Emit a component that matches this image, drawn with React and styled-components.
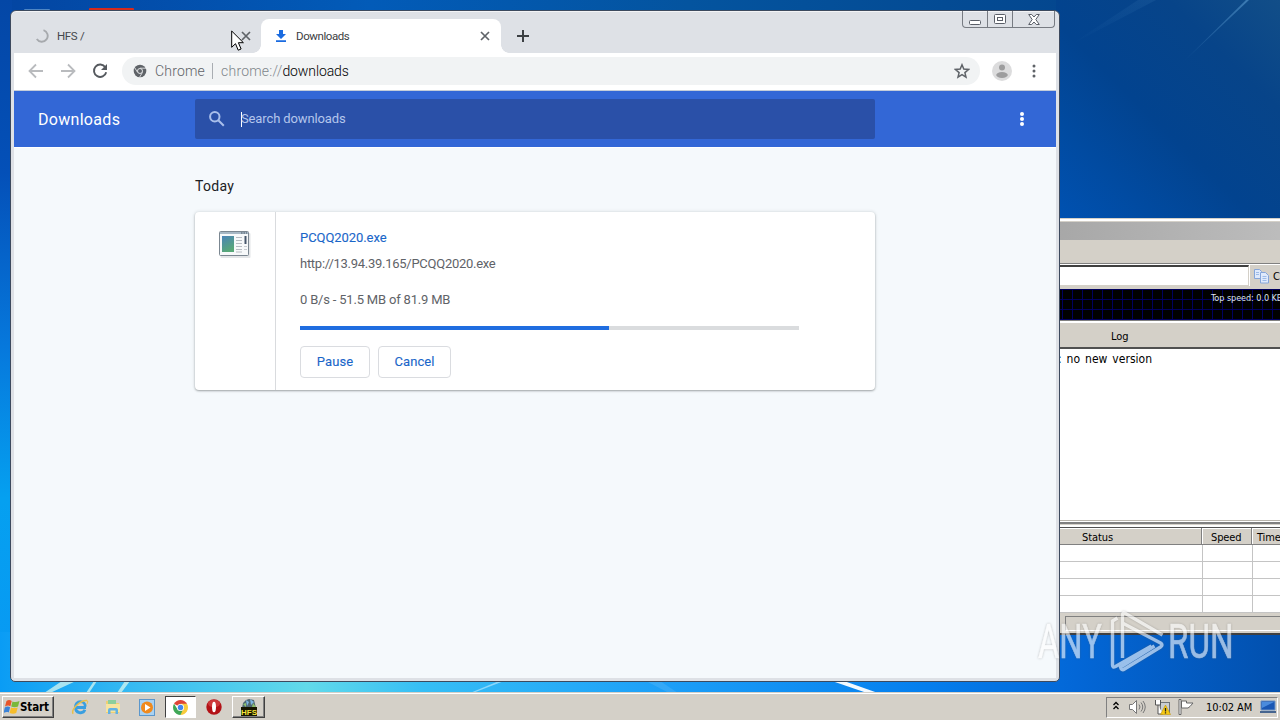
import React from "react";
import styled, { createGlobalStyle, css } from "styled-components";

const GlobalStyle = createGlobalStyle`
    * {
        box-sizing: border-box;
    }

    body {
        margin: 0;
        overflow: hidden;
    }
`;

const roboto = `Roboto, "Liberation Sans", sans-serif`;
const tahoma = `"DejaVu Sans Condensed", "DejaVu Sans", sans-serif`;

const Desktop = styled.main`
    position: relative;
    display: flex;
    flex-direction: column;
    justify-content: flex-end;
    width: 1280px;
    height: 720px;
    overflow: hidden;
    background: #0050b0;
    font-family: ${roboto};
`;

const Wallpaper = styled.svg`
    position: absolute;
    top: 0;
    left: 0;
`;

/* ---------- HFS window ---------- */

const HfsWindow = styled.section`
    position: absolute;
    top: 218px;
    left: 1000px;
    width: 300px;
    height: 417px;
    display: flex;
    flex-direction: column;
    background: #d4d0c8;
    border-top: 1px solid #d4d0c8;
    border-bottom: 2px solid #404040;
    box-shadow: inset 0 2px 0 #fff;
    font: 11px ${tahoma};
    color: #000;
`;

const HfsTitle = styled.div`
    height: 18px;
    margin-top: 3px;
    flex: none;
    background: linear-gradient(90deg, #a2a2a2, #bebebe);
`;

const HfsMenu = styled.div`
    height: 24px;
    flex: none;
    border-bottom: 1px solid #808080;
`;

const HfsAddress = styled.div`
    display: flex;
    height: 24px;
    flex: none;
    border-top: 1px solid #fff;
    border-bottom: 2px solid #d4d0c8;
`;

const HfsInput = styled.div`
    width: 249px;
    background: #fff;
    border-top: 2px solid #404040;
    border-bottom: 1px solid #d4d0c8;
    border-right: 1px solid #d4d0c8;
`;

const CopyButton = styled.div`
    display: flex;
    align-items: center;
    gap: 4px;
    padding: 1px 0 0 4px;
    border-left: 1px solid #fff;
    white-space: nowrap;
`;

const Graph = styled.div`
    height: 31px;
    flex: none;
    margin-top: 1px;
    padding: 3px 0 0 211px;
    background-color: #000;
    background-image: linear-gradient(90deg, transparent 9px, #00005e 9px), linear-gradient(transparent 9px, #00005e 9px);
    background-size: 10px 10px;
    background-position: 3px 1px;
    color: #dfe3ea;
    font-size: 9px;
    line-height: 12px;
    letter-spacing: -0.05px;
    white-space: nowrap;
`;

const LogHeader = styled.div`
    height: 29px;
    flex: none;
    padding: 3px 0 0 111px;
    border-top: 1px solid #808080;
    border-bottom: 2px solid #505050;
    box-shadow: inset 0 2px 0 #fff;
    line-height: 26px;
`;

const Log = styled.div`
    height: 171px;
    flex: none;
    padding: 2px 0 0 58px;
    background: #fff;
    font-size: 12px;
    line-height: 16px;
    letter-spacing: 0.02px;
    word-spacing: 1.5px;
`;

const Splitter = styled.div`
    height: 7px;
    flex: none;
    background: linear-gradient(#b8b4ac 1px, #fff 1px 2px, #808080 2px 4px, #d4d0c8 4px 5px, #fff 5px);
`;

const TableRow = styled.div`
    display: grid;
    grid-template-columns: 203px 50px 1fr;
    height: 17px;
    flex: none;
    ${p => p.$head ? css`
        grid-template-columns: 202px 50px 1fr;
        height: 18px;
        border-top: 1px solid #505050;
        border-bottom: 1px solid #808080;
    ` : css`
        background: #fff;
        border-bottom: 1px solid #c4c4c4;
    `}
`;

const Cell = styled.span`
    padding-left: ${p => p.$pad || 0}px;
    border-right: 1px solid ${p => p.$head ? "#808080" : "#c4c4c4"};
    ${p => p.$head && css`
        height: 16px;
        box-shadow: inset 1px 1px 0 #fff;
        line-height: 19px;
        letter-spacing: -0.1px;
    `}
`;

const HfsStatus = styled.div`
    flex: 1;
    margin: 3px 0 2px 65px;
    border-top: 1px solid #808080;
    border-left: 1px solid #808080;
    border-bottom: 1px solid #fff;
`;

/* ---------- browser ---------- */

const Browser = styled.section`
    position: absolute;
    top: 10px;
    left: 10px;
    width: 1050px;
    height: 672px;
    display: flex;
    flex-direction: column;
    padding: 0 3px 3px;
    border: 1px solid #3d4a5e;
    border-radius: 6px 6px 5px 5px;
    background: #dee1e6;
    box-shadow: inset 0 1px 0 #f3f4f6;
`;

const TabStrip = styled.header`
    display: flex;
    align-items: flex-end;
    height: 42px;
    flex: none;
    padding-left: 8px;
`;

const Tab = styled.div`
    position: relative;
    display: flex;
    align-items: center;
    width: ${p => p.$active ? 240 : 239}px;
    height: 34px;
    padding: 0 ${p => p.$active ? 11 : 10}px 0 13px;
    border-radius: 8px 8px 0 0;
    background: ${p => p.$active ? "#fff" : "transparent"};
    color: ${p => p.$active ? "#3c4043" : "#45484c"};

    ${p => p.$active && css`
        &::before,
        &::after {
            content: "";
            position: absolute;
            bottom: 0;
            width: 8px;
            height: 8px;
        }

        &::before {
            left: -8px;
            background: radial-gradient(circle at 0 0, transparent 7.5px, #fff 8px);
        }

        &::after {
            right: -8px;
            background: radial-gradient(circle at 100% 0, transparent 7.5px, #fff 8px);
        }
    `}
`;

const TabTitle = styled.span`
    flex: 1;
    margin-left: 8px;
    font-size: 11.5px;
    letter-spacing: -0.42px;
    word-spacing: 0.5px;
`;

const NewTab = styled.div`
    display: flex;
    align-items: center;
    height: 34px;
    margin-left: 15px;
`;

const WindowButtons = styled.div`
    display: flex;
    align-self: flex-start;
    height: 17px;
    margin: 0 1px 0 auto;
    border: 1px solid #777b82;
    border-top: 0;
    border-radius: 0 0 4px 4px;
`;

const WindowButton = styled.div`
    display: flex;
    align-items: center;
    justify-content: center;
    width: ${p => p.$w}px;

    & + & {
        border-left: 1px solid #777b82;
    }
`;

const Toolbar = styled.nav`
    display: flex;
    align-items: center;
    height: 38px;
    flex: none;
    padding: 0 14px 1px;
    background: #fff;
    border-bottom: 1px solid #c5cdda;
`;

const NavIcons = styled.div`
    display: flex;
    gap: 16px;
    width: 94px;
    flex: none;
`;

const Omnibox = styled.div`
    display: flex;
    align-items: center;
    width: 858px;
    height: 28px;
    flex: none;
    margin-right: 12px;
    padding: 0 10px 0 11px;
    border-radius: 14px;
    background: #f1f3f4;
    color: #5f6368;
    font-size: 14px;
    font-weight: 300;
    letter-spacing: 0.2px;
`;

const SiteName = styled.span`
    margin-left: 8px;
    padding-right: 7px;
    border-right: 1px solid #a9adb2;
    line-height: 16px;
    letter-spacing: 0.2px;
`;

const Url = styled.span`
    flex: 1;
    padding-left: 8px;
    color: #80868b;

    b {
        font-weight: 300;
        color: #000;
        letter-spacing: -0.1px;
    }
`;

const ToolbarMenu = styled.div`
    display: flex;
    margin-left: 18px;
`;

const PageHeader = styled.header`
    display: flex;
    align-items: center;
    height: 56px;
    flex: none;
    padding: 0 30px 0 24px;
    background: #3367d6;
    color: #fff;
`;

const PageTitle = styled.h1`
    width: 157px;
    margin: 0;
    font-size: 16px;
    font-weight: 400;
    letter-spacing: 0.3px;
`;

const Search = styled.div`
    display: flex;
    align-items: center;
    width: 680px;
    height: 40px;
    padding: 0 0 1px 12px;
    border-radius: 2px;
    background: #2a50a8;
    color: #b4c6ec;
    font-size: 13px;
    letter-spacing: -0.12px;
`;

const Caret = styled.i`
    width: 1px;
    height: 15px;
    margin: 1px -1px 0 14px;
    background: #fff;
`;

const HeaderMenu = styled.div`
    display: flex;
    margin-left: auto;
`;

const Page = styled.div`
    flex: 1;
    padding: 31px 0 0 181px;
    background: #f5f9fc;
    box-shadow: inset 0 1px 0 #fff;
`;

const DayTitle = styled.h2`
    height: 16px;
    margin: 0 0 18px;
    color: #202124;
    font-size: 14px;
    font-weight: 400;
    line-height: 16px;
    letter-spacing: 0.3px;
`;

const Card = styled.article`
    display: flex;
    width: 680px;
    height: 178px;
    background: #fff;
    border-radius: 4px;
    box-shadow: 0 1px 2px rgba(60, 64, 67, 0.4), 0 0 3px 1px rgba(60, 64, 67, 0.1);
`;

const FileIconBox = styled.div`
    width: 81px;
    padding: 19px 0 0 24px;
    border-right: 1px solid #d9dbde;
`;

const Details = styled.div`
    display: flex;
    flex-direction: column;
    padding: 16px 0 0 24px;
    font-size: 13px;
    line-height: 20px;
    color: #5f6368;
`;

const FileName = styled.span`
    color: #1a66c9;
    -webkit-text-stroke: 0.1px;
    letter-spacing: -0.07px;
`;

const FileUrl = styled.span`
    margin-top: 6px;
    letter-spacing: -0.27px;
`;

const Status = styled.span`
    margin-top: 16px;
    letter-spacing: -0.19px;
`;

const Track = styled.div`
    width: 499px;
    height: 4px;
    margin-top: 16px;
    background: #dadcde;
`;

const Progress = styled.div`
    height: 4px;
    background: #1f6de0;
`;

const Actions = styled.div`
    display: flex;
    gap: 8px;
    margin-top: 16px;
`;

const ActionButton = styled.button`
    width: ${p => p.$w}px;
    height: 32px;
    padding: 0 0 2px;
    border: 1px solid #dadce0;
    border-radius: 4px;
    background: #fff;
    color: #1a66c9;
    font: 400 13px ${roboto};
    -webkit-text-stroke: 0.1px;
    letter-spacing: 0.1px;
`;

const Pointer = styled.svg`
    position: absolute;
    top: 30px;
    left: 231px;
`;

/* ---------- taskbar ---------- */

const Taskbar = styled.footer`
    position: relative;
    display: flex;
    align-items: center;
    height: 28px;
    padding: 1px 2px 0;
    background: #d4d0c8;
    border-top: 1px solid #d4d0c8;
    box-shadow: inset 0 1px 0 #fff;
    font-family: ${tahoma};
`;

const raised = css`
    border: 1px solid;
    border-color: #fff #404040 #404040 #fff;
    box-shadow: inset -1px -1px 0 #808080;
`;

const StartButton = styled.div`
    ${raised}
    display: flex;
    align-items: center;
    width: 52px;
    height: 22px;
    padding-left: 1px;
    font-size: 11.5px;
    font-weight: 700;
    letter-spacing: -0.1px;
`;

const Launch = styled.div`
    display: flex;
    align-items: center;
    justify-content: center;
    width: ${p => p.$w}px;
    height: 22px;
    margin-left: ${p => p.$gap}px;
    ${p => p.$raised && raised}
    ${p => p.$pressed && css`
        background: #fff;
        border: 1px solid;
        border-color: #404040 #fff #fff #404040;
    `}
`;

const Tray = styled.div`
    display: flex;
    align-items: center;
    gap: 7px;
    width: 172px;
    height: 21px;
    margin-left: auto;
    padding: 0 1px 0 5px;
    border: 1px solid;
    border-color: #808080 #fff #fff #808080;
`;

const Clock = styled.span`
    flex: 1;
    margin-left: 5px;
    font-size: 11px;
    letter-spacing: -0.1px;
    white-space: nowrap;
`;

const Watermark = styled.div`
    position: absolute;
    top: 605px;
    left: 1038px;
    display: flex;
    align-items: center;
    width: 200px;
    height: 72px;
    color: #fff;
    opacity: 0.6;
    filter: drop-shadow(0 0 1px rgba(90, 90, 90, 0.6));
`;

const Brand = styled.span`
    width: ${p => p.$w}px;
    margin-left: ${p => p.$gap || 0}px;
    padding-top: 2px;
    font-size: 48px;
    line-height: 72px;
    font-weight: 400;
    -webkit-text-stroke: 0.6px;
    white-space: nowrap;
    transform: scaleX(${p => p.$scale});
    transform-origin: 0 50%;
`;

const Close = () => (
    <svg width="10" height="10" viewBox="0 0 10 10" stroke="#5f6368" strokeWidth="1.7">
        <path d="M1 1l8 8M9 1l-8 8" />
    </svg>
);

const Dots = ({ color, gap = 5, r = 1.5 }) => (
    <svg width="8" height="16" viewBox="0 0 8 16" fill={color}>
        <circle cx="4" cy={8 - gap} r={r} />
        <circle cx="4" cy="8" r={r} />
        <circle cx="4" cy={8 + gap} r={r} />
    </svg>
);

const Arrow = ({ flip }) => (
    <svg width="16" height="16" viewBox="0 0 16 16" fill="none" stroke="#b9bbbe" strokeWidth="1.8">
        <path d={flip ? "M1 8h13M8 1.5L14.5 8 8 14.5" : "M15 8H2M8 1.5L1.5 8 8 14.5"} />
    </svg>
);

function Background() {
    return (
        <Wallpaper width="1280" height="720" viewBox="0 0 1280 720">
            <defs>
                <linearGradient id="side" x2="0" y2="1">
                    <stop offset="0" stopColor="#0447a6" />
                    <stop offset=".25" stopColor="#0450b8" />
                    <stop offset=".5" stopColor="#0678dc" />
                    <stop offset=".72" stopColor="#05a0f0" />
                    <stop offset="1" stopColor="#0898f4" />
                </linearGradient>
                <linearGradient id="top">
                    <stop offset="0" stopColor="#0345a2" />
                    <stop offset=".35" stopColor="#025bb8" />
                    <stop offset=".65" stopColor="#04549f" />
                    <stop offset="1" stopColor="#04478f" />
                </linearGradient>
                <linearGradient id="right" x1="0" y1="1" x2="1" y2="0">
                    <stop offset="0" stopColor="#0052b2" />
                    <stop offset=".45" stopColor="#02438f" />
                    <stop offset=".75" stopColor="#074489" />
                    <stop offset="1" stopColor="#124e88" />
                </linearGradient>
                <linearGradient id="bottom">
                    <stop offset="0" stopColor="#0a9cf5" />
                    <stop offset=".1" stopColor="#35b9f2" />
                    <stop offset=".24" stopColor="#62daea" />
                    <stop offset=".33" stopColor="#36bef5" />
                    <stop offset=".5" stopColor="#1fa2f8" />
                    <stop offset=".72" stopColor="#057fee" />
                    <stop offset=".84" stopColor="#0367d7" />
                    <stop offset="1" stopColor="#0250ae" />
                </linearGradient>
                <linearGradient id="ray" x1="0" y1="1" x2="1" y2="0">
                    <stop offset="0" stopColor="#5a9bd0" stopOpacity="0" />
                    <stop offset="1" stopColor="#5a9bd0" stopOpacity=".6" />
                </linearGradient>
            </defs>
            <rect width="1060" height="12" fill="url(#top)" />
            <rect width="12" height="692" fill="url(#side)" />
            <rect x="1056" width="224" height="220" fill="url(#right)" />
            <path d="M1180 65L1246 0h3z" fill="url(#ray)" />
            <path d="M1070 45L1138 0h18z" fill="url(#ray)" opacity=".2" />
            <rect y="632" width="1280" height="62" fill="url(#bottom)" />
            <path d="M44 693L62 681H76L50 693zM86 693l8-12h3l-8 12zM117 693l8-12h5l-9 12z" fill="#d8f7ef" opacity=".75" />
            <path d="M470 693l29-12h5l-31 12z" fill="#c7ecff" opacity=".6" />
            <path d="M646 681h14l18 12h-9z" fill="#fff" opacity=".1" />
            <path d="M832 681h12l34 12h-11z" fill="#fff" opacity=".95" />
            <rect x="24" y="9" width="26" height="3" rx="1" fill="#4f86c4" />
            <rect x="89" y="8" width="45" height="4" rx="1" fill="#d82a1c" />
        </Wallpaper>
    );
}

function Hfs() {
    return (
        <HfsWindow>
            <HfsTitle />
            <HfsMenu />
            <HfsAddress>
                <HfsInput />
                <CopyButton>
                    <svg width="15" height="16" viewBox="0 0 15 16" fill="#dfeafc" stroke="#86a6da">
                        <path d="M.5 1.500h5l2 2v7h-7z" />
                        <path d="M6.500 4.500h5l3 3v7.500h-8z" />
                        <path d="M2 4.500h3M2 6.500h3M8.500 8.500h4M8.500 10.500h4M8.500 12.500h4" stroke="#9dbbe8" />
                    </svg>
                    Copy
                </CopyButton>
            </HfsAddress>
            <Graph>Top speed: 0.0 KB/s</Graph>
            <LogHeader>Log</LogHeader>
            <Log>: no new version</Log>
            <Splitter />
            <TableRow $head>
                <Cell $head $pad={82}>Status</Cell>
                <Cell $head $pad={9}>Speed</Cell>
                <Cell $head $pad={5}>Time</Cell>
            </TableRow>
            {[0, 1, 2, 3].map(row => (
                <TableRow key={row}>
                    <Cell />
                    <Cell />
                </TableRow>
            ))}
            <HfsStatus />
        </HfsWindow>
    );
}

function DownloadCard({ name, url, status, percent }) {
    return (
        <Card>
            <FileIconBox>
                <svg width="32" height="28" viewBox="0 0 32 28">
                    <defs>
                        <linearGradient id="pic" x2="0.4" y2="1">
                            <stop offset="0" stopColor="#4a83b8" />
                            <stop offset="1" stopColor="#58a878" />
                        </linearGradient>
                    </defs>
                    <rect x="1.500" y="2" width="30" height="25" rx="1" fill="#e4e6e8" />
                    <rect x=".5" y=".5" width="29" height="24" rx="1" fill="#f7f9fa" stroke="#7b8791" />
                    <path d="M1 2h28" stroke="#a7b8c5" strokeWidth="2" />
                    <path d="M22 2h6" stroke="#4d5966" strokeDasharray="1.500 1" />
                    <rect x="3" y="5" width="12" height="16" fill="url(#pic)" />
                    <path d="M17 6.500h6M17 9.500h6M17 12.500h6M17 15.500h6M17 18.500h6M17 21h6" stroke="#b7bcc2" />
                    <path d="M25 15.500h3M25 18.500h3" stroke="#c7cbd0" />
                    <path d="M26.500 5v8" stroke="#46566b" strokeWidth="2" />
                </svg>
            </FileIconBox>
            <Details>
                <FileName>{name}</FileName>
                <FileUrl>{url}</FileUrl>
                <Status>{status}</Status>
                <Track>
                    <Progress style={{ width: `${percent}%` }} />
                </Track>
                <Actions>
                    <ActionButton $w={70}>Pause</ActionButton>
                    <ActionButton $w={73}>Cancel</ActionButton>
                </Actions>
            </Details>
        </Card>
    );
}

function BrowserWindow() {
    return (
        <Browser>
            <TabStrip>
                <Tab>
                    <svg width="14" height="14" viewBox="0 0 14 14" fill="none" stroke="#a6a9ad" strokeWidth="1.900">
                        <path d="M8.500 1.200A5.900 5.900 0 1 1 1.800 10" />
                    </svg>
                    <TabTitle>HFS /</TabTitle>
                    <Close />
                </Tab>
                <Tab $active>
                    <svg width="14" height="14" viewBox="0 0 14 14" fill="#1a6be0">
                        <path d="M5 1h4v4h3L7 10 2 5h3zM2 11.300h10v1.700H2z" />
                    </svg>
                    <TabTitle>Downloads</TabTitle>
                    <Close />
                </Tab>
                <NewTab>
                    <svg width="14" height="14" viewBox="0 0 14 14" stroke="#3c4043" strokeWidth="2">
                        <path d="M7 1v12M1 7h12" />
                    </svg>
                </NewTab>
                <WindowButtons>
                    <WindowButton $w={24}>
                        <svg width="12" height="14" viewBox="0 0 12 14" fill="#fff" stroke="#5a5f68">
                            <rect x=".5" y="8.500" width="11" height="4" rx="1" />
                        </svg>
                    </WindowButton>
                    <WindowButton $w={25}>
                        <svg width="12" height="10" viewBox="0 0 12 10" fill="#fff" stroke="#5a5f68">
                            <rect x=".5" y=".5" width="11" height="9" rx="1" />
                            <rect x="3.500" y="3.500" width="5" height="3" />
                        </svg>
                    </WindowButton>
                    <WindowButton $w={42}>
                        <svg width="12" height="11" viewBox="0 0 12 11" fill="#fff" stroke="#5a5f68">
                            <path d="M.7.500h3L6 3l2.300-2.500h3L7.800 5.500l3.500 5h-3L6 8l-2.300 2.500h-3l3.500-5z" />
                        </svg>
                    </WindowButton>
                </WindowButtons>
            </TabStrip>
            <Toolbar>
                <NavIcons>
                    <Arrow />
                    <Arrow flip />
                    <svg width="16" height="16" viewBox="0 0 16 16">
                        <path d="M13.300 4.200A6.200 6.200 0 1 0 14.200 9.200" fill="none" stroke="#55595e" strokeWidth="1.900" />
                        <path d="M15 1v6H9z" fill="#55595e" />
                    </svg>
                </NavIcons>
                <Omnibox>
                    <svg width="14" height="14" viewBox="0 0 14 14">
                        <circle cx="7" cy="7" r="6.300" fill="#5f6368" />
                        <path d="M7 4.200h6M4.500 8.300L1.600 3.500M9.500 8.300L6.600 13.200" stroke="#f1f3f4" strokeWidth=".8" />
                        <circle cx="7" cy="7" r="2.500" fill="#5f6368" stroke="#f1f3f4" strokeWidth=".9" />
                    </svg>
                    <SiteName>Chrome</SiteName>
                    <Url>chrome://<b>downloads</b></Url>
                    <svg width="16" height="16" viewBox="0 0 16 16" fill="none" stroke="#5f6368" strokeWidth="1.500">
                        <path d="M8 1.800l1.800 4.300 4.700.4-3.600 3.100 1.100 4.500L8 11.700l-4 2.400 1.100-4.500L1.500 6.500l4.700-.4z" />
                    </svg>
                </Omnibox>
                <svg width="20" height="20" viewBox="0 0 20 20">
                    <circle cx="10" cy="10" r="10" fill="#dcdcdd" />
                    <circle cx="10" cy="6.500" r="3" fill="#9d9d9e" />
                    <ellipse cx="10" cy="14" rx="5.800" ry="2.900" fill="#9d9d9e" />
                </svg>
                <ToolbarMenu>
                    <Dots color="#5f6368" />
                </ToolbarMenu>
            </Toolbar>
            <PageHeader>
                <PageTitle>Downloads</PageTitle>
                <Search>
                    <svg width="20" height="20" viewBox="0 0 20 20" fill="none" stroke="#a9bfeb" strokeWidth="2">
                        <circle cx="7.800" cy="7.800" r="4.700" />
                        <path d="M11.300 11.300l5.500 5.500" />
                    </svg>
                    <Caret />
                    Search downloads
                </Search>
                <HeaderMenu>
                    <Dots color="#fff" gap={5} r={2} />
                </HeaderMenu>
            </PageHeader>
            <Page>
                <DayTitle>Today</DayTitle>
                <DownloadCard
                    name="PCQQ2020.exe"
                    url="http://13.94.39.165/PCQQ2020.exe"
                    status="0 B/s - 51.5 MB of 81.9 MB"
                    percent={62}
                />
            </Page>
        </Browser>
    );
}

function ChromeLogo() {
    return (
        <svg width="15" height="15" viewBox="0 0 16 16">
            <path d="M8 8L1.100 4A8 8 0 0 1 14.900 4z" fill="#de4437" />
            <path d="M8 8V4h6.900A8 8 0 0 1 8 16z" fill="#f8cb3c" />
            <path d="M8 8l2.500 2.500L8 16A8 8 0 0 1 1.100 4L5 10z" fill="#3fa757" />
            <circle cx="8" cy="8" r="3.800" fill="#fff" />
            <circle cx="8" cy="8" r="2.900" fill="#4386ee" />
        </svg>
    );
}

function Bar() {
    return (
        <Taskbar>
            <StartButton>
                <svg width="16" height="16" viewBox="0 0 16 16">
                    <path d="M2.500 2C4.500.7 6 1 7.700 1.900L6.400 7.200C4.700 6.300 3 6.500 1 7.400z" fill="#e8552a" />
                    <path d="M8.500 2.400c1.800.8 4.400.8 7-.5L14 7.500c-2.200 1-4.800.8-6.800 0z" fill="#79b83a" />
                    <path d="M.8 8.400c1.800-1 3.700-1 5.300-.2L4.800 13.600C3.200 12.800 1.700 13-.4 13.900z" fill="#3b83d8" />
                    <path d="M7 8.500c1.800.8 4.400.8 6.700 0l-1.500 5.500c-2 1-4.600.8-6.600 0z" fill="#f6bd2b" />
                </svg>
                Start
            </StartButton>
            <Launch $w={20} $gap={16}>
                <svg width="18" height="18" viewBox="0 0 18 18" fill="none">
                    <path d="M15 9.500H4.700a4.800 4.800 0 0 0 9.200 2.300M4.400 8.700a4.900 4.900 0 0 1 9.900-.2" stroke="#3a9fe0" strokeWidth="2.800" />
                    <path d="M2.200 15.800C-.5 12 9 2 16 2.400" stroke="#e8bf49" strokeWidth="1.500" />
                    <path d="M16 2.400c1.500.4.500 3-.4 4" stroke="#e8bf49" />
                </svg>
            </Launch>
            <Launch $w={20} $gap={13}>
                <svg width="16" height="16" viewBox="0 0 16 16">
                    <path d="M1 2h5l1 2h7v10H1z" fill="#efcf72" />
                    <path d="M3 1h8v5H3z" fill="#8ccf9c" />
                    <path d="M1 5h14v8H1z" fill="#f7e4a0" />
                    <path d="M3 15v-4q0-2 2-2h6q2 0 2 2v4h-2.500v-3.500h-5V15z" fill="#63b2e3" />
                </svg>
            </Launch>
            <Launch $w={20} $gap={14}>
                <svg width="16" height="17" viewBox="0 0 16 17">
                    <rect x=".5" y=".5" width="15" height="16" fill="#a9d2f2" stroke="#5b97cc" />
                    <circle cx="8" cy="8.500" r="6" fill="#f08a1d" />
                    <path d="M6 5l5.500 3.500L6 12z" fill="#fff" />
                </svg>
            </Launch>
            <Launch $w={31} $gap={8} $pressed>
                <ChromeLogo />
            </Launch>
            <Launch $w={18} $gap={9}>
                <svg width="16" height="16" viewBox="0 0 16 16">
                    <circle cx="8" cy="8" r="7.700" fill="#b31217" />
                    <ellipse cx="8" cy="4.500" rx="6" ry="3.800" fill="#d8494a" opacity=".7" />
                    <ellipse cx="8" cy="8" rx="2" ry="5.300" fill="#fff" />
                </svg>
            </Launch>
            <Launch $w={33} $gap={9} $raised>
                <svg width="18" height="18" viewBox="0 0 18 18">
                    <path d="M2 10l1-5 3-3 3-1 5 1 2 8z" fill="#4f6672" />
                    <path d="M6 2l3 2-2 4zM10 1l4 3-3 3z" fill="#7fb6e2" />
                    <path d="M3 6l3-1v4zM13 5l3 4h-4z" fill="#8ec06f" />
                    <rect x="1" y="9" width="16" height="9" fill="#171500" />
                    <text x="9" y="16.500" textAnchor="middle" fontSize="8" fontWeight="700" fontFamily="Liberation Sans" fill="#f4e43a">HFS</text>
                </svg>
            </Launch>
            <Tray>
                <svg width="10" height="12" viewBox="0 0 10 12" fill="none" stroke="#000" strokeWidth="1.300">
                    <path d="M1.500 4l2.500-2.500L6.500 4M1.500 8L4 5.500 6.500 8" />
                </svg>
                <svg width="18" height="16" viewBox="0 0 18 16" fill="none" stroke="#777">
                    <path d="M.5 5.500h3l4-4v13l-4-4h-3z" fill="#fff" />
                    <path d="M10 5.500q2 2.500 0 5M12 3.500q3.500 4.500 0 9M14 2q4.500 6 0 12" />
                </svg>
                <svg width="17" height="17" viewBox="0 0 17 17">
                    <rect x="6.500" y="3.500" width="9" height="10" fill="#c9cdd1" stroke="#6e7378" />
                    <path d="M1.500 1v5h5V1M4 6v9h5" fill="#fff" stroke="#555" />
                    <path d="M11.500 6l5 9.500h-10z" fill="#f6c913" stroke="#c09407" strokeWidth=".6" />
                    <path d="M11.500 9v3.500M11.500 13.300v1.200" stroke="#222" strokeWidth="1.300" />
                </svg>
                <svg width="16" height="16" viewBox="0 0 16 16" fill="#fff" stroke="#666">
                    <path d="M1 .5h2v15H1z" />
                    <path d="M3.500 2h5v2h6.500l-3 3.500-2 1.500H3.500z" />
                </svg>
                <Clock>10:02 AM</Clock>
                <svg width="16" height="14" viewBox="0 0 16 14">
                    <path d="M1 1h14v9H1z" fill="#1a57b4" stroke="#6d93c5" />
                    <path d="M2 2h12L2 8z" fill="#4a8bdd" />
                    <path d="M0 12h16" stroke="#46658f" strokeWidth="2" />
                </svg>
            </Tray>
        </Taskbar>
    );
}

export default function App() {
    return (
        <Desktop>
            <GlobalStyle />
            <Background />
            <Hfs />
            <BrowserWindow />
            <Bar />
            <Watermark>
                <Brand $w={70} $scale={0.68}>ANY</Brand>
                <svg width="58" height="64" viewBox="0 0 57 64" fill="none" stroke="#fff" strokeWidth="3.400">
                    <path d="M14 49V6q0-3 3-1.500L54 26M9 9l-5 3v44q0 3 3 1.500L43 37" />
                    <path d="M14 14l38 20q3 2 0 4L16 60q-3 2-4-2l34-21" />
                </svg>
                <Brand $w={64} $gap={2} $scale={0.69}>RUN</Brand>
            </Watermark>
            <Pointer width="13" height="22" viewBox="0 0 13 22">
                <path d="M.7 1v16.300l3.800-3.600 2.700 6.500 2.900-1.200-2.700-6.300h5z" fill="#fff" stroke="#000" />
            </Pointer>
        </Desktop>
    );
}
